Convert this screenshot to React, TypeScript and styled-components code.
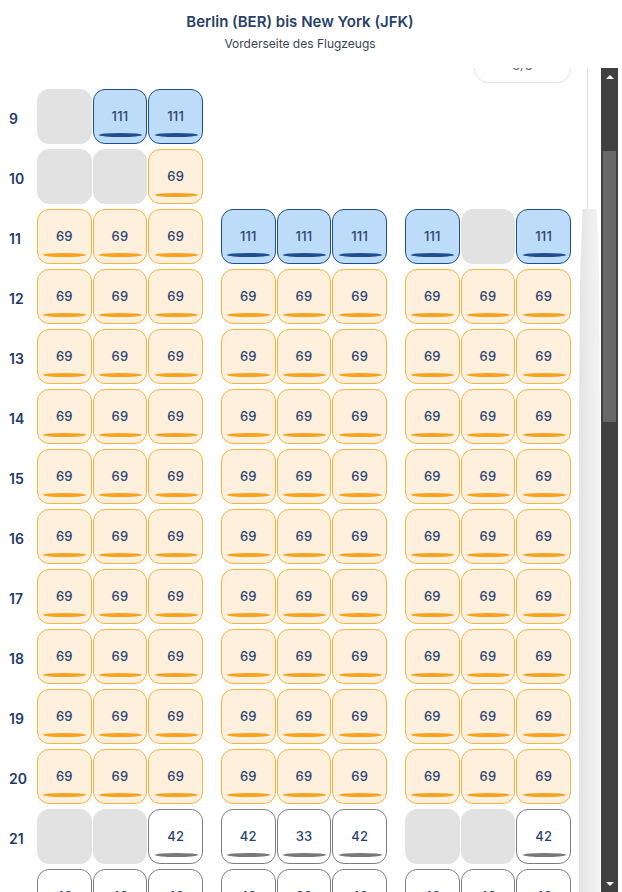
import React, { useLayoutEffect, useRef } from 'react';
import styled, { createGlobalStyle, css } from 'styled-components';

type SeatKind = 'business' | 'premium' | 'standard' | 'empty';
type Seat = { kind: SeatKind; price?: number };
type Block = Seat[] | null;
type Row = { n: number; blocks: Block[] };

const GlobalStyle = createGlobalStyle`
  html, body { margin: 0; padding: 0; background: #fff; }
  body { font-family: Inter, "Noto Sans", Arial, sans-serif; color: #1f3a6b; }
`;

const Frame = styled.div`
  width: 618px;
  height: 892px;
  display: flex;
  flex-direction: column;
  background: #fff;
  overflow: hidden;
`;

const Header = styled.header`
  flex: none;
  height: 68px;
  box-sizing: border-box;
  padding: 12px 18px 0 0;
  display: flex;
  flex-direction: column;
  align-items: center;
`;

const Title = styled.h1`
  margin: 0;
  font-size: 15px;
  line-height: 20px;
  font-weight: 600;
  color: #283f6c;
`;

const Subtitle = styled.p`
  margin: 4px 0 0;
  font-size: 12px;
  line-height: 16px;
  color: #3c4352;
`;

const Body = styled.div`
  flex: 1;
  min-height: 0;
  display: flex;
`;

const Scroller = styled.div`
  width: 601px;
  flex: none;
  overflow: hidden;
`;

const ScrollBar = styled.div`
  width: 17px;
  flex: none;
  background: #404040;
  display: flex;
  flex-direction: column;
`;

const ArrowButton = styled.div`
  height: 17px;
  flex: none;
  display: flex;
  align-items: center;
  justify-content: center;
`;

const Track = styled.div`
  flex: 1;
  padding: 0 2px;
`;

const Thumb = styled.div`
  margin-top: 66px;
  height: 271px;
  background: #686868;
`;

const Content = styled.div`
  display: flex;
  padding: 180px 0 145px;
`;

const Main = styled.div`
  width: 571px;
  display: flex;
  flex-direction: column;
`;

const PillRow = styled.div`
  height: 36px;
  margin-bottom: 6px;
  display: flex;
  justify-content: flex-end;
`;

const Pill = styled.div`
  width: 97px;
  box-sizing: border-box;
  border: 1px solid #e3e3e3;
  border-radius: 14px;
  background: #fff;
  display: flex;
  align-items: center;
  justify-content: center;
  font-size: 13px;
  color: #666;
`;

const Rows = styled.div`
  display: flex;
  flex-direction: column;
  gap: 5px;
`;

const RowLine = styled.div`
  display: flex;
  height: 55px;
`;

const RowLabel = styled.div`
  width: 37px;
  flex: none;
  box-sizing: border-box;
  display: flex;
  align-items: center;
  padding: 3px 0 0 9px;
  font-size: 14px;
  font-weight: 600;
  color: #1f3a6b;
`;

const Blocks = styled.div`
  display: grid;
  grid-template-columns: repeat(3, 166px);
  column-gap: 18px;
`;

const SeatBlock = styled.div`
  display: grid;
  grid-template-columns: repeat(3, 1fr);
  column-gap: 1px;
`;

const seatColors: Record<SeatKind, { bg: string; border: string; bar: string }> = {
  business: { bg: '#bddcfa', border: '#1e4e8c', bar: '#1e4e8c' },
  premium: { bg: '#fef0dc', border: '#f8b33c', bar: '#f6a31f' },
  standard: { bg: '#ffffff', border: '#7d7d7d', bar: '#787878' },
  empty: { bg: '#e2e2e2', border: '#e2e2e2', bar: 'transparent' },
};

const SeatBox = styled.div<{ $kind: SeatKind }>`
  box-sizing: border-box;
  height: 55px;
  border-radius: 12px;
  border: 1px solid ${(p) => seatColors[p.$kind].border};
  background: ${(p) => seatColors[p.$kind].bg};
  display: flex;
  flex-direction: column;
  align-items: center;
`;

const SeatNumber = styled.span`
  flex: 1;
  padding-top: 9px;
  display: flex;
  align-items: center;
  font-size: 13px;
  font-weight: 500;
  letter-spacing: 0.2px;
  color: #2b4470;
`;

const SeatBar = styled.span<{ $kind: SeatKind }>`
  width: 43px;
  height: 4px;
  margin: 0 0 6px 1px;
  border-radius: 50%;
  background: ${(p) => seatColors[p.$kind].bar};
  ${(p) =>
    p.$kind === 'empty' &&
    css`
      visibility: hidden;
    `}
`;

const Fuselage = styled.div`
  width: 30px;
  display: flex;
  flex-direction: column;
`;

const FuselageLine = styled.div`
  width: 1px;
  height: 162px;
  margin-left: 16px;
  background: #e0e0e0;
  flex: none;
`;

const Wing = styled.div`
  flex: 1;
  width: 21px;
  margin-left: 8px;
  background: linear-gradient(to right, #e4e4e4, #f4f4f4);
  clip-path: polygon(17% 0, 85% 0, 95% 60px, 100% 200px, 100% 100%, 0 100%, 0 200px, 6% 60px);
`;

const E: Seat = { kind: 'empty' };
const B: Seat = { kind: 'business', price: 111 };
const P: Seat = { kind: 'premium', price: 69 };
const S42: Seat = { kind: 'standard', price: 42 };
const S33: Seat = { kind: 'standard', price: 33 };

const rows: Row[] = [];
rows.push({ n: 9, blocks: [[E, B, B], null, null] });
rows.push({ n: 10, blocks: [[E, E, P], null, null] });
rows.push({ n: 11, blocks: [[P, P, P], [B, B, B], [B, E, B]] });
for (let n = 12; n <= 20; n++) rows.push({ n, blocks: [[P, P, P], [P, P, P], [P, P, P]] });
rows.push({ n: 21, blocks: [[E, E, S42], [S42, S33, S42], [E, E, S42]] });
for (let n = 22; n <= 42; n++) rows.push({ n, blocks: [[S42, S42, S42], [S42, S33, S42], [S42, S42, S42]] });

function SeatView({ seat }: { seat: Seat }) {
  return (
    <SeatBox $kind={seat.kind}>
      <SeatNumber>{seat.price ?? ''}</SeatNumber>
      <SeatBar $kind={seat.kind} />
    </SeatBox>
  );
}

function Arrow({ up }: { up?: boolean }) {
  return (
    <ArrowButton>
      <svg width="8" height="4" viewBox="0 0 8 4">
        <polygon points={up ? '0,4 8,4 4,0' : '0,0 8,0 4,4'} fill="#fff" />
      </svg>
    </ArrowButton>
  );
}

export default function App() {
  const ref = useRef<HTMLDivElement>(null);
  useLayoutEffect(() => {
    if (ref.current) ref.current.scrollTop = 201;
  }, []);

  return (
    <Frame>
      <GlobalStyle />
      <Header>
        <Title>Berlin (BER) bis New York (JFK)</Title>
        <Subtitle>Vorderseite des Flugzeugs</Subtitle>
      </Header>
      <Body>
        <Scroller ref={ref}>
          <Content>
            <Main>
              <PillRow>
                <Pill>3/3</Pill>
              </PillRow>
              <Rows>
                {rows.map((row) => (
                  <RowLine key={row.n}>
                    <RowLabel>{row.n}</RowLabel>
                    <Blocks>
                      {row.blocks.map((block, bi) => (
                        <SeatBlock key={bi}>
                          {block?.map((seat, si) => <SeatView key={si} seat={seat} />)}
                        </SeatBlock>
                      ))}
                    </Blocks>
                  </RowLine>
                ))}
              </Rows>
            </Main>
            <Fuselage>
              <FuselageLine />
              <Wing />
            </Fuselage>
          </Content>
        </Scroller>
        <ScrollBar>
          <Arrow up />
          <Track>
            <Thumb />
          </Track>
          <Arrow />
        </ScrollBar>
      </Body>
    </Frame>
  );
}
